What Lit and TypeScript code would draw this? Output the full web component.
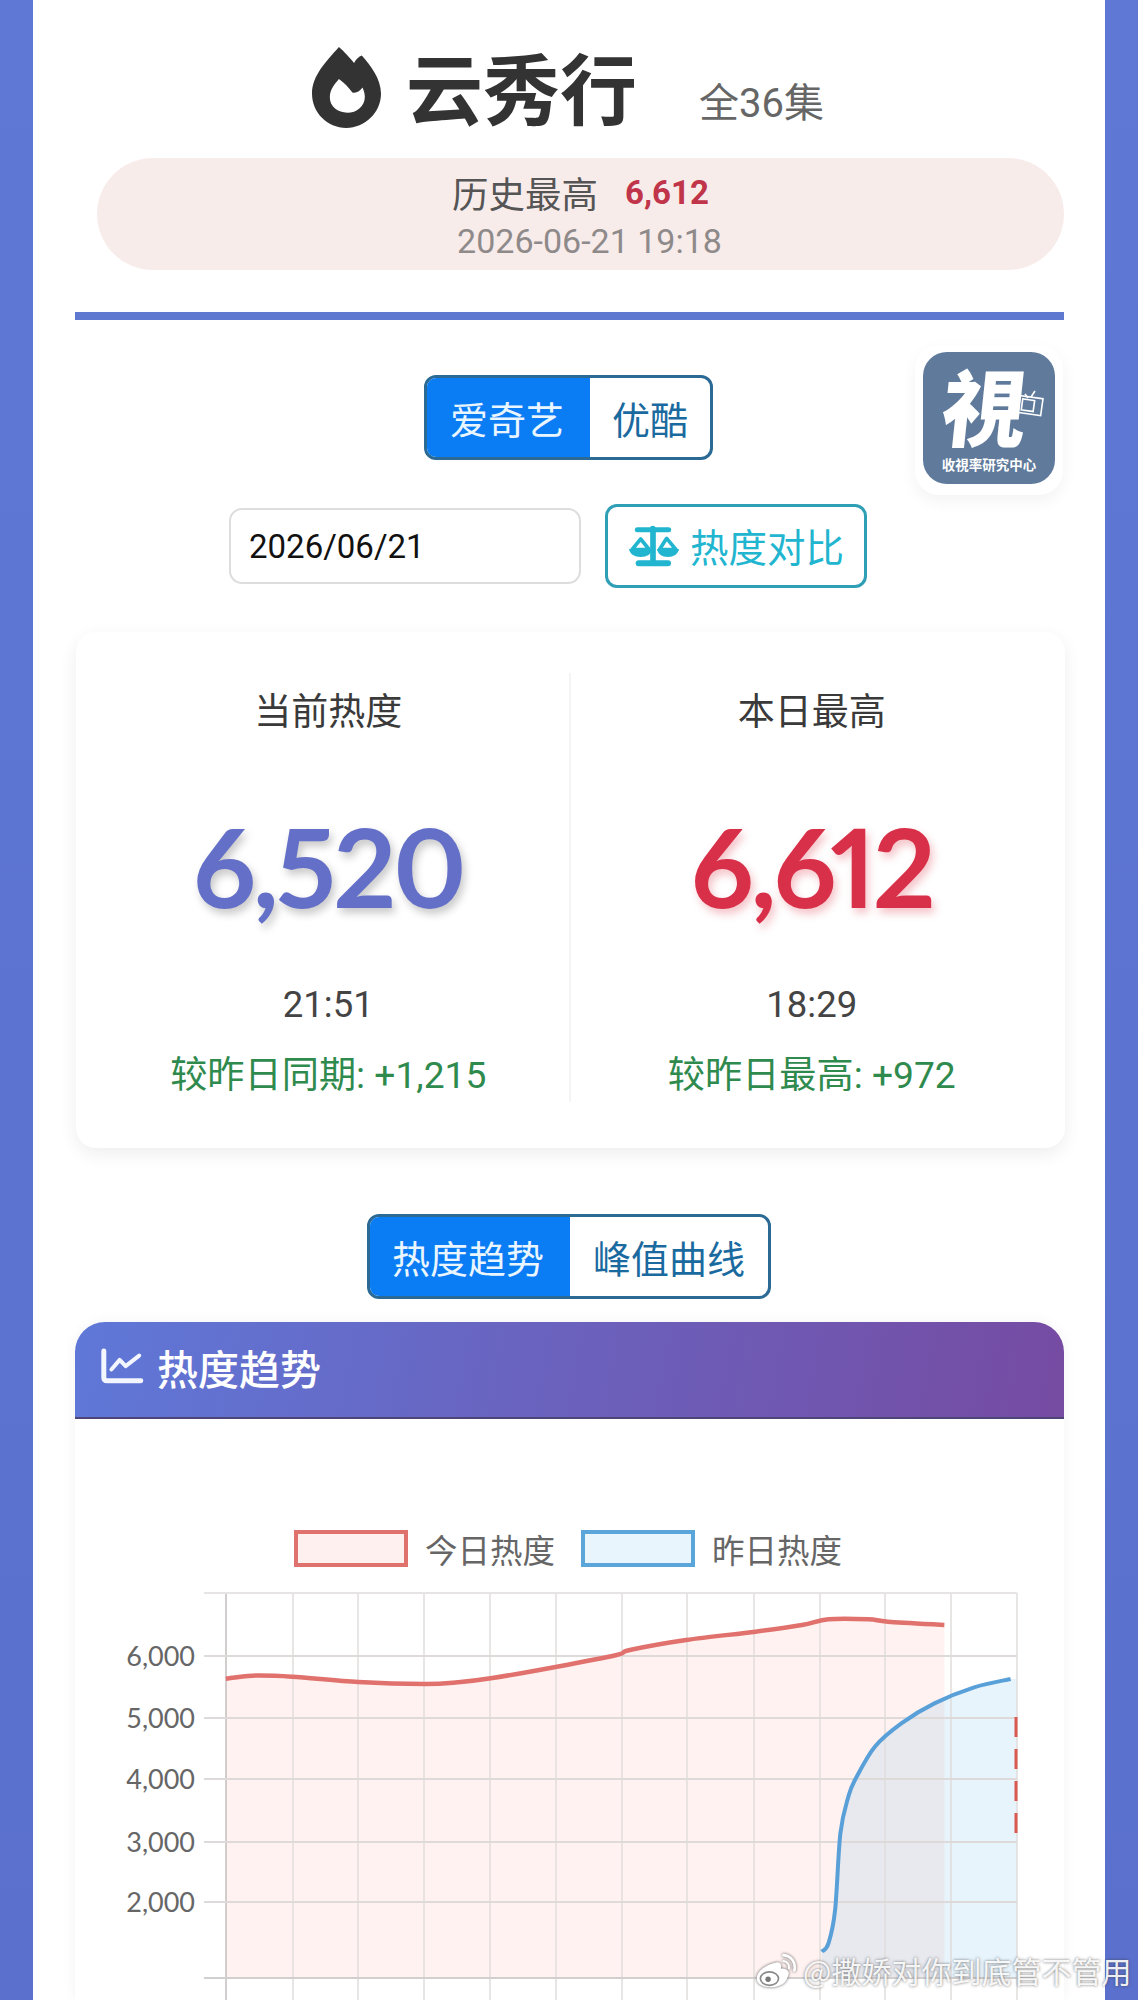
import { LitElement, html, css, svg } from "lit";
import { customElement } from "lit/decorators.js";

const X = (z: number) => z / 1.51 + 100;
const Y = (z: number) => z / 3 + 1580;
const red = [[190,296],[230,287],[290,290],[390,306],[490,312],[540,307],[590,295],[690,260],[780,225],[800,210],[885,180],[990,155],[1060,135],[1100,118],[1160,118],[1190,125],[1275,135]].map(([a,b]) => [X(a),Y(b)]);
const blue = [[1090,1115],[1100,1090],[1110,990],[1118,760],[1130,650],[1140,600],[1170,500],[1210,430],[1260,370],[1320,322],[1375,297]].map(([a,b]) => [X(a),Y(b)]);

function smooth(p: number[][]) {
  let d = `M${p[0][0]} ${p[0][1]}`;
  for (let i = 0; i < p.length - 1; i++) {
    const a = p[Math.max(0, i - 1)], b = p[i], c = p[i + 1], e = p[Math.min(p.length - 1, i + 2)];
    d += ` C${b[0] + (c[0] - a[0]) / 6} ${b[1] + (c[1] - a[1]) / 6} ${c[0] - (e[0] - b[0]) / 6} ${c[1] - (e[1] - b[1]) / 6} ${c[0]} ${c[1]}`;
  }
  return d;
}
const BASE = 1978;
const vx = [226,293,358,424,490,556,622,687,754,820,885,951,1017];
const ticks: [number,string][] = [[1656,"6,000"],[1718,"5,000"],[1779,"4,000"],[1842,"3,000"],[1902,"2,000"]];

@customElement("app-root")
export class AppRoot extends LitElement {
  static styles = css`
    :host { display:block; position:relative; height:2000px; overflow:hidden; background:linear-gradient(180deg,#5f78d6,#5a70cc); font-family:"Noto Sans CJK SC","Noto Sans",sans-serif; color:#333; }
    .panel { margin:0 33px; height:2000px; background:#fff; padding:47px 41px 0 42px; box-sizing:border-box; }
    .title { display:flex; align-items:flex-start; height:83px; padding-left:237px; }
    .flame { width:69px; height:81px; display:block; }
    .name { font-size:77px; line-height:78px; font-weight:700; color:#333; margin-left:25px; }
    .eps { font-size:40px; line-height:44px; color:#666; margin:35px 0 0 62px; white-space:nowrap; font-family:"Roboto","Noto Sans CJK SC",sans-serif; }
    .pill { margin:28px 0 0 22px; height:112px; border-radius:56px; background:#f8eceb; display:flex; flex-direction:column; align-items:center; }
    .pill .top { display:flex; align-items:center; gap:27px; height:68px; font-size:36.5px; color:#555; }
    .pill b { font-family:"Roboto",sans-serif; font-size:33px; font-weight:700; color:#c0354a; }
    .pill .date { font-family:"Roboto",sans-serif; font-size:34px; line-height:30px; color:#8f8a8a; padding-left:18px; }
    .rule { height:8px; margin-top:42px; background:#5f78d0; }
    .seg { display:flex; width:max-content; border:3px solid #2b6a94; border-radius:12px; overflow:hidden; box-sizing:border-box; height:85px; background:#fff; }
    .seg span { display:flex; align-items:center; font-size:38px; color:#1a6aa0; padding:0 22px; }
    .seg span.on { background:#0a7df5; color:#eaf6ff; margin:-3px 0 -3px -3px; padding:0 26px; }
    .seg1 { margin:55px 0 0 349px; }
    .logo { position:absolute; left:915px; top:345px; width:148px; height:150px; box-sizing:border-box; padding:7px 8px 11px 8px; background:#fff; border-radius:24px; box-shadow:0 6px 16px rgba(0,0,0,.05); }
    .logo .in { height:132px; background:#5f7a9b; border-radius:24px; color:#fff; display:flex; flex-direction:column; align-items:center; position:relative; }
    .logo .glyph { font-family:"Noto Sans CJK TC",sans-serif; font-weight:900; font-size:84px; line-height:104px; margin-left:-8px; transform:skewX(-6deg); }
    .logo .sub { font-size:13.5px; line-height:16px; white-space:nowrap; font-weight:700; }
    .logo svg { position:absolute; left:92px; top:36px; width:30px; height:30px; }
    .controls { display:flex; align-items:center; margin:44px 0 0 154px; gap:24px; }
    .date-input { width:352px; height:76px; box-sizing:border-box; border:2px solid #ddd; border-radius:13px; display:flex; align-items:center; padding-left:18px; font-family:"Roboto",sans-serif; font-size:33px; color:#111; }
    .cmp { width:262px; height:84px; box-sizing:border-box; border:3px solid #2f9fb5; border-radius:12px; display:flex; align-items:center; padding:0 0 3px 12px; font-size:38.5px; color:#22b5d0; }
    .cmp svg { width:70px; height:60px; flex:none; }
    .stats { margin:44px -1px 0 1px; height:516px; box-sizing:border-box; padding:41px 0 46px; border-radius:20px; background:#fff; box-shadow:0 6px 18px rgba(0,0,0,.07); display:grid; grid-template-columns:1fr 1fr; }
    .col { display:flex; flex-direction:column; align-items:center; }
    .col.l { border-right:2px solid #f4f4f4; padding-left:12px; }
    .col.r { padding-right:12px; }
    .lab { font-size:37px; line-height:72px; color:#3a3a3a; }
    .num { height:240px; padding-bottom:4px; display:flex; align-items:center; font-family:"Lato",sans-serif; font-weight:700; font-size:110px; letter-spacing:-3px; line-height:1; font-variant-numeric:proportional-nums; font-feature-settings:"pnum" 1; text-shadow:3px 5px 8px rgba(0,0,0,.22); }
    .num.b { color:#6470c8; }
    .num.d { color:#d9304a; text-shadow:3px 5px 8px rgba(220,53,69,.3); }
    .time { font-family:"Roboto",sans-serif; font-size:36.5px; line-height:32px; color:#444; }
    .delta { margin-top:28px; font-size:37.2px; line-height:53px; color:#2f8a4e; white-space:nowrap; font-family:"Roboto","Noto Sans CJK SC",sans-serif; }
    .seg2 { margin:66px 0 0 292px; }
    .seg2 span { padding:0 23px; }
    .seg2 span.on { padding:0 26px 0 25px; }
    .card { margin-top:23px; border-radius:30px 30px 0 0; box-shadow:0 0 14px rgba(0,0,0,.05); }
    .head { height:97px; box-sizing:border-box; border-bottom:2px solid #4d4478; border-radius:30px 30px 0 0; background:linear-gradient(100deg,#5f78d8,#764ba2); display:flex; align-items:center; padding:0 0 6px 22px; gap:10px; color:#fff; font-size:41px; font-weight:500; }
    .head svg { width:50px; height:43px; flex:none; }
    .body { height:581px; position:relative; }
    .legend { display:flex; align-items:center; position:relative; height:37px; padding:111px 0 0 219px; font-size:32.5px; color:#666; line-height:37px; }
    .box { width:114px; height:37px; box-sizing:border-box; border:4px solid; flex:none; }
    .box.a { border-color:#e0726e; background:#fdf0ee; }
    .box.c { border-color:#5aa5da; background:#e8f5fc; margin-left:26px; }
    .legend span { margin-left:17px; white-space:nowrap; }
    .chart { position:absolute; left:0; top:0; width:989px; height:581px; display:block; }
    .chart text { font-family:"Lato",sans-serif; font-size:27px; fill:#666; text-anchor:end; }
    .mark { position:absolute; left:755px; top:1951px; display:flex; align-items:center; gap:6px; color:rgba(255,255,255,.92); font-size:30px; line-height:38px; white-space:nowrap; text-shadow:0 0 3px rgba(60,60,60,.75); }
    .mark svg { width:42px; height:36px; flex:none; filter:drop-shadow(0 0 1.5px rgba(60,60,60,.85)); }
  `;

  chart() {
    const redFill = smooth(red) + ` L${red[red.length-1][0]} ${BASE} L226 ${BASE} Z`;
    const blueFill = smooth(blue) + ` L1017 ${blue[blue.length-1][1]} L1017 ${BASE} L${blue[0][0]} ${BASE} Z`;
    return html`<svg class="chart" viewBox="75 1419 989 581">
      <path d=${redFill} fill="#fb6a55" fill-opacity=".09"></path>
      <path d=${blueFill} fill="#7cc4f0" fill-opacity=".18"></path>
      ${vx.map((x, i) => svg`<line x1=${x} x2=${x} y1="1593" y2="2000" stroke=${i === 0 ? "#c4bebe" : "#e0dcdc"} stroke-width="1.5"></line>`)}
      <line x1="204" x2="1017" y1="1593" y2="1593" stroke="#e6e4e4" stroke-width="2"></line>
      ${ticks.map(([y, t]) => svg`<line x1="204" x2="1017" y1=${y} y2=${y} stroke="#dedada" stroke-width="2"></line><text x="195" y=${y + 10}>${t}</text>`)}
      <line x1="204" x2="1017" y1=${BASE} y2=${BASE} stroke="#d2cfcf" stroke-width="2"></line>
      <path d=${smooth(red)} fill="none" stroke="#e0716d" stroke-width="4.5"></path>
      <path d=${smooth(blue)} fill="none" stroke="#5aa0d8" stroke-width="4"></path>
      <line x1="1016" x2="1016" y1="1717" y2="1842" stroke="#d9584f" stroke-width="3" stroke-dasharray="20 12"></line>
    </svg>`;
  }

  render() {
    return html`<div class="panel">
      <div class="title">
        <svg class="flame" viewBox="65 50 205 240"><path fill-rule="evenodd" fill="#333" d="M145 50C160 62 178 84 190 97C196 86 204 78 213 75C240 105 270 145 270 188C270 245 222 290 167 290C110 290 65 245 65 188C65 135 108 92 145 50ZM145 145C133 160 118 175 118 200C118 227 142 245 170 245C198 245 222 225 222 198C222 188 219 178 215 170C208 180 197 188 185 185C175 172 160 155 145 145Z"></path></svg>
        <div class="name">云秀行</div>
        <div class="eps">全36集</div>
      </div>
      <div class="pill">
        <div class="top"><span>历史最高</span><b>6,612</b></div>
        <div class="date">2026-06-21 19:18</div>
      </div>
      <div class="rule"></div>
      <div class="seg seg1"><span class="on">爱奇艺</span><span>优酷</span></div>
      <div class="logo"><div class="in">
        <div class="glyph">視</div>
        <div class="sub">收視率研究中心</div>
        <svg viewBox="0 0 30 30" fill="none" stroke="#fff" stroke-width="1.6"><path d="M10 6L13 10M20 3L16 9"></path><rect x="4" y="9" width="23" height="17" transform="rotate(8 15 17)"></rect><rect x="7" y="12" width="12" height="11" transform="rotate(8 15 17)"></rect></svg>
      </div></div>
      <div class="controls">
        <div class="date-input">2026/06/21</div>
        <div class="cmp">
          <svg viewBox="0 0 210 180" fill="#22b5d0" stroke="#22b5d0" stroke-linecap="round" stroke-linejoin="round">
            <path d="M52 44H146" fill="none" stroke-width="15"></path>
            <circle cx="98" cy="40" r="8" stroke="none"></circle>
            <path d="M99 42V142" fill="none" stroke-width="17"></path>
            <path d="M56 145H144" fill="none" stroke-width="18"></path>
            <path d="M62 72L36 104H88Z" fill="none" stroke-width="11"></path>
            <path d="M27 102H97C95 117 80 126 62 126C44 126 29 117 27 102Z" stroke="none"></path>
            <path d="M140 70L118 104H168Z" fill="none" stroke-width="11"></path>
            <path d="M111 102H177C175 117 160 126 144 126C126 126 113 117 111 102Z" stroke="none"></path>
          </svg>
          <span>热度对比</span>
        </div>
      </div>
      <div class="stats">
        <div class="col l">
          <div class="lab">当前热度</div>
          <div class="num b">6,520</div>
          <div class="time">21:51</div>
          <div class="delta">较昨日同期: +1,215</div>
        </div>
        <div class="col r">
          <div class="lab">本日最高</div>
          <div class="num d">6,612</div>
          <div class="time">18:29</div>
          <div class="delta">较昨日最高: +972</div>
        </div>
      </div>
      <div class="seg seg2"><span class="on">热度趋势</span><span>峰值曲线</span></div>
      <div class="card">
        <div class="head">
          <svg viewBox="20 20 150 130" fill="none" stroke="#f4f6ff" stroke-linecap="round" stroke-linejoin="round"><path d="M40 38V118Q40 128 50 128H152" stroke-width="15"></path><path d="M63 94L88 65L106 84L147 52" stroke-width="12"></path></svg>
          <span>热度趋势</span>
        </div>
        <div class="body">
          ${this.chart()}
          <div class="legend"><div class="box a"></div><span>今日热度</span><div class="box c"></div><span>昨日热度</span></div>
        </div>
      </div>
    </div>
    <div class="mark">
      <svg viewBox="15 22 125 105" fill="none">
        <path d="M20 100C20 78 48 58 78 52C92 50 95 62 92 70C110 68 122 80 112 96C106 118 82 126 62 126C38 126 20 116 20 100Z" fill="#fff"></path>
        <ellipse cx="58" cy="100" rx="27" ry="20" fill="#fff" stroke="#8a8a8a" stroke-width="5"></ellipse>
        <circle cx="54" cy="102" r="8" fill="#777"></circle>
        <path d="M100 30C122 32 138 52 132 76" stroke="#fff" stroke-width="8" stroke-linecap="round"></path>
        <path d="M100 48C112 50 118 60 116 70" stroke="#fff" stroke-width="6" stroke-linecap="round"></path>
      </svg>
      <span>@撒娇对你到底管不管用</span>
    </div>`;
  }
}
